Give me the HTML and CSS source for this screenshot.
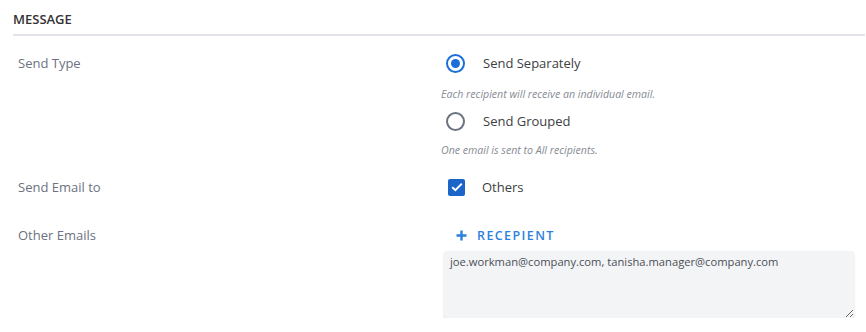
FILE: index.html
```html
<!DOCTYPE html>
<html>
<head>
<meta charset="utf-8">
<link rel="stylesheet" href="styles.css">
</head>
<body>
<section class="panel">
  <h2 class="title">MESSAGE</h2>
  <div class="form">
    <div class="row row-type">
      <div class="label">Send Type</div>
      <div class="field">
        <label class="option">
          <span class="radio checked"></span>
          <span class="opt-text">Send Separately</span>
        </label>
        <div class="help help-1">Each recipient will receive an individual email.</div>
        <label class="option option-2">
          <span class="radio"></span>
          <span class="opt-text">Send Grouped</span>
        </label>
        <div class="help help-2">One email is sent to All recipients.</div>
      </div>
    </div>
    <div class="row row-to">
      <div class="label">Send Email to</div>
      <div class="field">
        <label class="option">
          <span class="check">
            <svg width="12" height="10" viewBox="0 0 12 10"><path d="M1.2 5.2 L4.4 8.2 L10.8 1.6" fill="none" stroke="#fff" stroke-width="2"/></svg>
          </span>
          <span class="opt-text">Others</span>
        </label>
      </div>
    </div>
    <div class="row row-emails">
      <div class="label">Other Emails</div>
      <div class="field">
        <button class="add-btn">
          <svg width="11" height="11" viewBox="0 0 11 11"><path d="M5.5 0.5 V10.5 M0.5 5.5 H10.5" stroke="#2f7fdc" stroke-width="2.4"/></svg>
          <span>RECEPIENT</span>
        </button>
        <textarea class="emails">joe.workman@company.com, tanisha.manager@company.com</textarea>
      </div>
    </div>
  </div>
</section>
</body>
</html>
```

FILE: styles.css
```css
* { box-sizing: border-box; }
html, body { margin: 0; padding: 0; background: #fff; }
body {
  font-family: "Open Sans", "Noto Sans", sans-serif;
  font-size: 13px;
  color: #3c4043;
}
.panel {
  padding: 10px 1px 0 13px;
}
.title {
  margin: 0;
  font-size: 13px;
  font-weight: 600;
  color: #333;
  line-height: 18px;
  padding-bottom: 6px;
  border-bottom: 2px solid #e2e4ea;
}
.form {
  padding-left: 5px;
  padding-top: 17px;
}
.row {
  display: grid;
  grid-template-columns: 423px 1fr;
}
.label {
  color: #6b7280;
  line-height: 20px;
}
.field { display: flex; flex-direction: column; align-items: flex-start; }
.option {
  display: flex;
  align-items: center;
  height: 20px;
  padding-left: 5px;
}
.radio {
  width: 19px;
  height: 19px;
  border-radius: 50%;
  border: 2px solid #6b7280;
  display: flex;
  align-items: center;
  justify-content: center;
}
.radio.checked { border-color: #1a6fd8; }
.radio.checked::after {
  content: "";
  width: 9px;
  height: 9px;
  border-radius: 50%;
  background: #1a6fd8;
}
.opt-text {
  margin-left: 18px;
  color: #3c4043;
}
.help {
  font-size: 10.6px;
  font-style: italic;
  color: #868b94;
  line-height: 14px;
}
.help-1 { margin-top: 14px; }
.help-2 { margin-top: 12px; }
.option-2 { margin-top: 10px; }
.row-to { margin-top: 20px; }
.check {
  width: 17px;
  height: 17px;
  margin-left: 2px;
  border-radius: 2px;
  background: #1b64c8;
  display: flex;
  align-items: center;
  justify-content: center;
}
.row-to .opt-text { margin-left: 17px; }
.row-emails { margin-top: 28px; }
.add-btn {
  display: flex;
  align-items: center;
  gap: 10px;
  border: 0;
  background: none;
  padding: 0 0 0 15px;
  height: 20px;
  font-family: inherit;
  font-size: 12.5px;
  font-weight: 600;
  letter-spacing: 1.4px;
  color: #2f7fdc;
}
.emails {
  margin-top: 6px;
  margin-left: 3px;
  width: 410px;
  height: 67px;
  border: 0;
  border-radius: 3px;
  background: #f3f4f6;
  box-shadow: 0 1px 2px rgba(0,0,0,0.18);
  font-family: inherit;
  font-size: 11.2px;
  color: #4b4f56;
  padding: 3px 6px;
  resize: vertical;
}
```
